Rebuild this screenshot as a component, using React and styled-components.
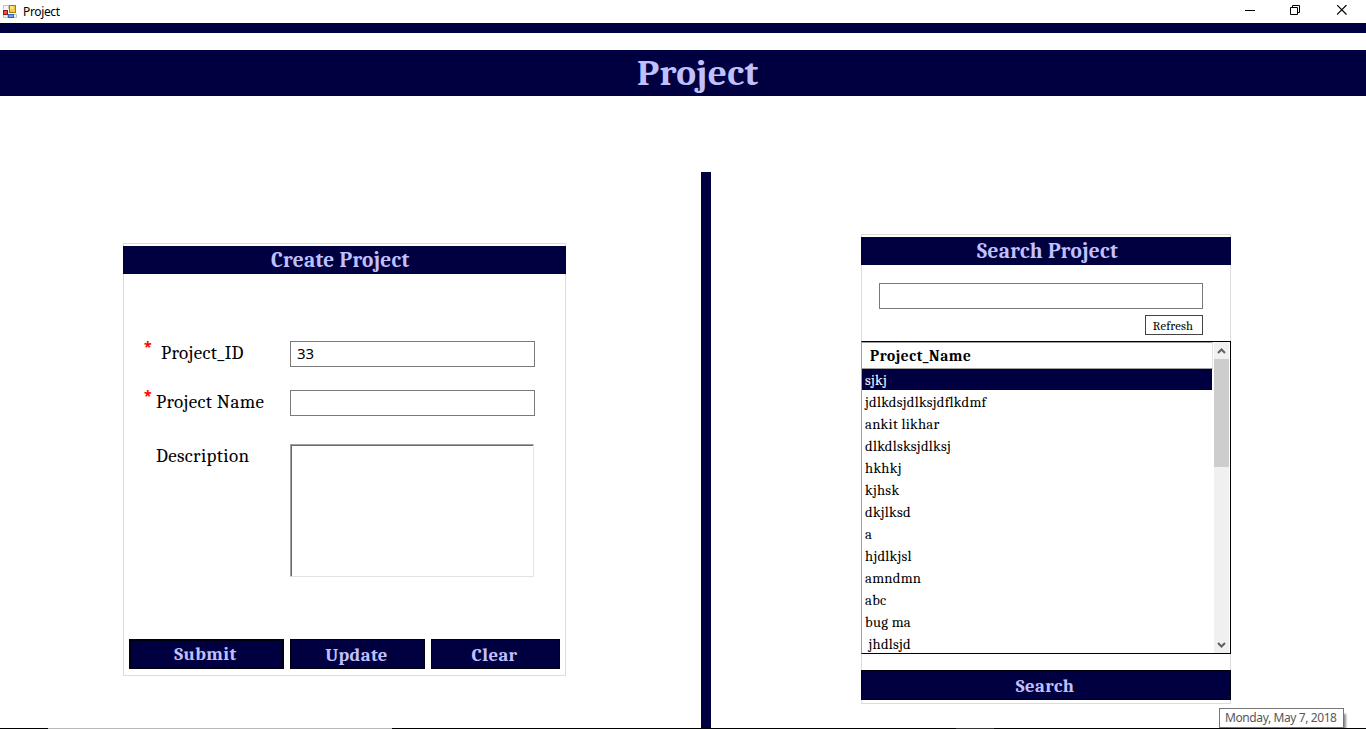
import React from "react";
import styled, { createGlobalStyle, css } from "styled-components";

const navy = "#000040";
const lilac = "#c0c0ff";
const serif = `Cambria, Caladea, "DejaVu Serif Condensed", serif`;
const sans = `"Segoe UI", "Noto Sans", "Open Sans", sans-serif`;

const GlobalStyle = createGlobalStyle`
  * { box-sizing: border-box; }
  html, body { margin: 0; padding: 0; background: #fff; overflow: hidden; }
  button, input, textarea { margin: 0; border-radius: 0; outline: none; }
`;

const Window = styled.div`
  position: relative;
  display: flex;
  flex-direction: column;
  width: 1366px;
  height: 729px;
  overflow: hidden;
  background: #fff;
  color: #000;
  font-family: ${serif};
  white-space: nowrap;
`;

const TitleBar = styled.header`
  display: flex;
  align-items: center;
  height: 23px;
  padding-left: 3px;
  flex: none;
`;

const WindowTitle = styled.span`
  flex: 1;
  margin-left: 6px;
  font: 12px/22px ${sans};
  letter-spacing: -0.35px;
`;

const Controls = styled.div`
  display: flex;
  height: 23px;
`;

const Control = styled.span`
  display: flex;
  justify-content: center;
  width: ${(p) => p.$width}px;
  padding-top: 5px;
`;

const TopStripe = styled.div`
  height: 10px;
  margin-bottom: 17px;
  flex: none;
  background: ${navy};
`;

const Banner = styled.h1`
  height: 46px;
  margin: 0;
  padding-left: 637px;
  flex: none;
  background: ${navy};
  color: ${lilac};
  font-size: 37.33px;
  font-weight: bold;
  line-height: 45px;
  letter-spacing: 0.35px;
`;

const Workspace = styled.main`
  display: grid;
  grid-template-columns: 701px 10px 1fr;
  flex: 1;
  min-height: 0;
`;

const Divider = styled.div`
  margin-top: 76px;
  background: ${navy};
`;

const Panel = styled.section`
  display: flex;
  flex-direction: column;
  width: ${(p) => p.$width}px;
  height: ${(p) => p.$height}px;
  margin: ${(p) => p.$top}px 0 0 ${(p) => p.$left}px;
  box-shadow: inset 0 0 0 1px #dcdcdc;
  padding-top: 3px;
`;

const PanelTitle = styled.h2`
  height: 28px;
  margin: 0;
  padding-left: ${(p) => p.$indent}px;
  flex: none;
  background: ${navy};
  color: ${lilac};
  font-size: 21.33px;
  font-weight: bold;
  line-height: 28px;
  letter-spacing: 0.3px;
`;

const Form = styled.div`
  display: flex;
  flex-direction: column;
  padding: 67px 0 0 21px;
`;

const Field = styled.div`
  display: grid;
  grid-template-columns: 12px 134px auto;
  justify-content: start;
  align-items: start;
  margin-bottom: ${(p) => p.$gap || 0}px;
`;

const Required = styled.span`
  color: #f00;
  font: bold 14px/12px ${sans};
`;

const Label = styled.label`
  padding-left: ${(p) => p.$indent || 0}px;
  font-size: 19px;
  line-height: 24px;
  letter-spacing: 0.35px;
`;

const fieldBox = css`
  border: 1px solid #7a7a7a;
  background: #fff;
`;

const TextInput = styled.input`
  ${fieldBox}
  width: 245px;
  height: 26px;
  padding: 0 6px 2px;
  font: 15px ${sans};
`;

const TextArea = styled.textarea`
  width: 244px;
  height: 133px;
  border: 1px solid;
  border-color: #a0a0a0 #e3e3e3 #e3e3e3 #a0a0a0;
  box-shadow: inset 1px 1px 0 #696969;
  resize: none;
`;

const Actions = styled.div`
  display: flex;
  gap: 6px;
  margin: auto 6px 7px;
`;

const ActionButton = styled.button`
  width: ${(p) => p.$width}px;
  height: 30px;
  padding: 1px 2px 0 0;
  flex: none;
  border: ${(p) => (p.$focused ? 2 : 1)}px solid #00000f;
  background: ${navy};
  color: ${lilac};
  font: bold 18.67px/${(p) => (p.$focused ? 25 : 26)}px ${serif};
  letter-spacing: 0.42px;
`;

const SearchArea = styled.div`
  display: flex;
  flex-direction: column;
  align-items: flex-end;
  padding: 18px 28px 6px 18px;
`;

const SearchInput = styled.input`
  ${fieldBox}
  width: 324px;
  height: 26px;
`;

const RefreshButton = styled.button`
  width: 58px;
  height: 20px;
  margin-top: 6px;
  padding: 1px 2px 0 0;
  border: 1px solid #444;
  background: #fff;
  color: #000;
  font: 12.5px/18px ${serif};
  letter-spacing: 0.2px;
`;

const Grid = styled.div`
  display: flex;
  height: 313px;
  flex: none;
  border: 1px solid #000;
  border-left-color: #a0a0a0;
  background: #fff;
`;

const Rows = styled.div`
  flex: 1;
  height: 311px;
  overflow: hidden;
  padding-right: 1px;
`;

const ColumnHeader = styled.div`
  height: 27px;
  padding-left: 8px;
  border: 1px solid;
  border-color: #a0a0a0 #e3e3e3 #a0a0a0 transparent;
  border-left: 0;
  font-size: 15.3px;
  font-weight: bold;
  line-height: 26px;
  letter-spacing: 0.58px;
`;

const Row = styled.div`
  height: 22px;
  margin-right: 1px;
  padding-left: 3px;
  border-bottom: 1px solid #fff;
  background: ${(p) => (p.$selected ? navy : "#fff")};
  color: ${(p) => (p.$selected ? "#fff" : "#000")};
  font-size: 14.67px;
  line-height: 24px;
  letter-spacing: 0.27px;
  white-space: pre;
`;

const Scrollbar = styled.div`
  display: flex;
  flex-direction: column;
  justify-content: space-between;
  width: 16px;
  border-right: 1px solid #fff;
  background: #f0f0f0;
`;

const ScrollThumb = styled.div`
  height: 108px;
  margin-bottom: auto;
  background: #cdcdcd;
`;

const ScrollArrow = styled.svg`
  display: block;
  width: 15px;
  height: 17px;
`;

const SearchFooter = styled.div`
  display: flex;
  margin-top: 16px;
`;

const BottomEdge = styled.footer`
  display: flex;
  height: 1px;
  flex: none;
  background: #000;
`;

const EdgeSegment = styled.span`
  width: ${(p) => p.$width}px;
  margin-left: ${(p) => p.$offset}px;
  background: ${(p) => p.$color};
`;

const DateTip = styled.div`
  position: absolute;
  left: 1219px;
  top: 708px;
  width: 125px;
  height: 20px;
  padding-left: 5px;
  border: 1px solid #767676;
  background: #fff;
  color: #575757;
  font: 12px/17px ${sans};
  letter-spacing: -0.4px;
  box-shadow: 3px 5px 2px -1px rgba(0, 0, 0, 0.45);
`;

const AppIcon = () => (
  <svg width="14" height="14" viewBox="0 0 14 14" shapeRendering="crispEdges">
    <path d="M0 0h6v4H0zM0 9h5v4H0zM10 9h4v4h-4z" fill="#c4c4c4" />
    <path d="M1 1h4v3H1zM1 10h3v2H1zM11 10h2v2h-2z" fill="#f4f4f4" />
    <rect x="6" y="0" width="7" height="8" fill="#a87812" />
    <rect x="7" y="1" width="5" height="6" fill="#fcc83c" />
    <rect x="7" y="1" width="3" height="3" fill="#ffe58c" />
    <rect x="0" y="5" width="5" height="5" fill="#9c1410" />
    <rect x="1" y="6" width="3" height="3" fill="#ea5240" />
    <rect x="5" y="9" width="6" height="4" fill="#2863c8" />
    <rect x="6" y="10" width="4" height="2" fill="#6da5f5" />
  </svg>
);

const Glyph = ({ children }) => (
  <svg width="11" height="11" viewBox="0 0 11 11" fill="none" stroke="#000">
    {children}
  </svg>
);

const projects = [
  "sjkj", "jdlkdsjdlksjdflkdmf", "ankit likhar", "dlkdlsksjdlksj", "hkhkj",
  "kjhsk", "dkjlksd", "a", "hjdlkjsl", "amndmn", "abc", "bug ma", " jhdlsjd",
];

export default function App() {
  return (
    <>
      <GlobalStyle />
      <Window>
        <TitleBar>
          <AppIcon />
          <WindowTitle>Project</WindowTitle>
          <Controls>
            <Control $width={45}><Glyph><path d="M0 5.5h10" /></Glyph></Control>
            <Control $width={45}>
              <Glyph><path d="M.5 2.5h7v7h-7zM2.5 2.5v-2h7v7h-2" /></Glyph>
            </Control>
            <Control $width={48}>
              <Glyph><path d="M0 0l9.5 9.5M9.5 0L0 9.5" strokeWidth="1.15" /></Glyph>
            </Control>
          </Controls>
        </TitleBar>
        <TopStripe />
        <Banner>Project</Banner>
        <Workspace>
          <Panel $width={443} $height={433} $top={147} $left={123}>
            <PanelTitle $indent={148}>Create Project</PanelTitle>
            <Form>
              <Field $gap={23}>
                <Required>*</Required>
                <Label $indent={5}>Project_ID</Label>
                <TextInput defaultValue="33" />
              </Field>
              <Field $gap={28}>
                <Required>*</Required>
                <Label>Project Name</Label>
                <TextInput />
              </Field>
              <Field>
                <span />
                <Label>Description</Label>
                <TextArea />
              </Field>
            </Form>
            <Actions>
              <ActionButton $width={155} $focused>Submit</ActionButton>
              <ActionButton $width={135}>Update</ActionButton>
              <ActionButton $width={129}>Clear</ActionButton>
            </Actions>
          </Panel>
          <Divider />
          <Panel $width={370} $height={470} $top={138} $left={150}>
            <PanelTitle $indent={116}>Search Project</PanelTitle>
            <SearchArea>
              <SearchInput />
              <RefreshButton>Refresh</RefreshButton>
            </SearchArea>
            <Grid>
              <Rows>
                <ColumnHeader>Project_Name</ColumnHeader>
                {projects.map((name, i) => (
                  <Row key={name} $selected={i === 0}>{name}</Row>
                ))}
              </Rows>
              <Scrollbar>
                <ScrollArrow viewBox="0 0 15 17">
                  <path d="M4 11l3.5-3.5L11 11" fill="none" stroke="#606060" strokeWidth="2" />
                </ScrollArrow>
                <ScrollThumb />
                <ScrollArrow viewBox="0 0 15 17">
                  <path d="M4 7L7.5 10.5 11 7" fill="none" stroke="#606060" strokeWidth="2" />
                </ScrollArrow>
              </Scrollbar>
            </Grid>
            <SearchFooter>
              <ActionButton $width={370}>Search</ActionButton>
            </SearchFooter>
          </Panel>
        </Workspace>
        <BottomEdge>
          <EdgeSegment $offset={48} $width={344} $color="#b8b8b8" />
          <EdgeSegment $offset={564} $width={38} $color="#333" />
        </BottomEdge>
        <DateTip>Monday, May 7, 2018</DateTip>
      </Window>
    </>
  );
}
